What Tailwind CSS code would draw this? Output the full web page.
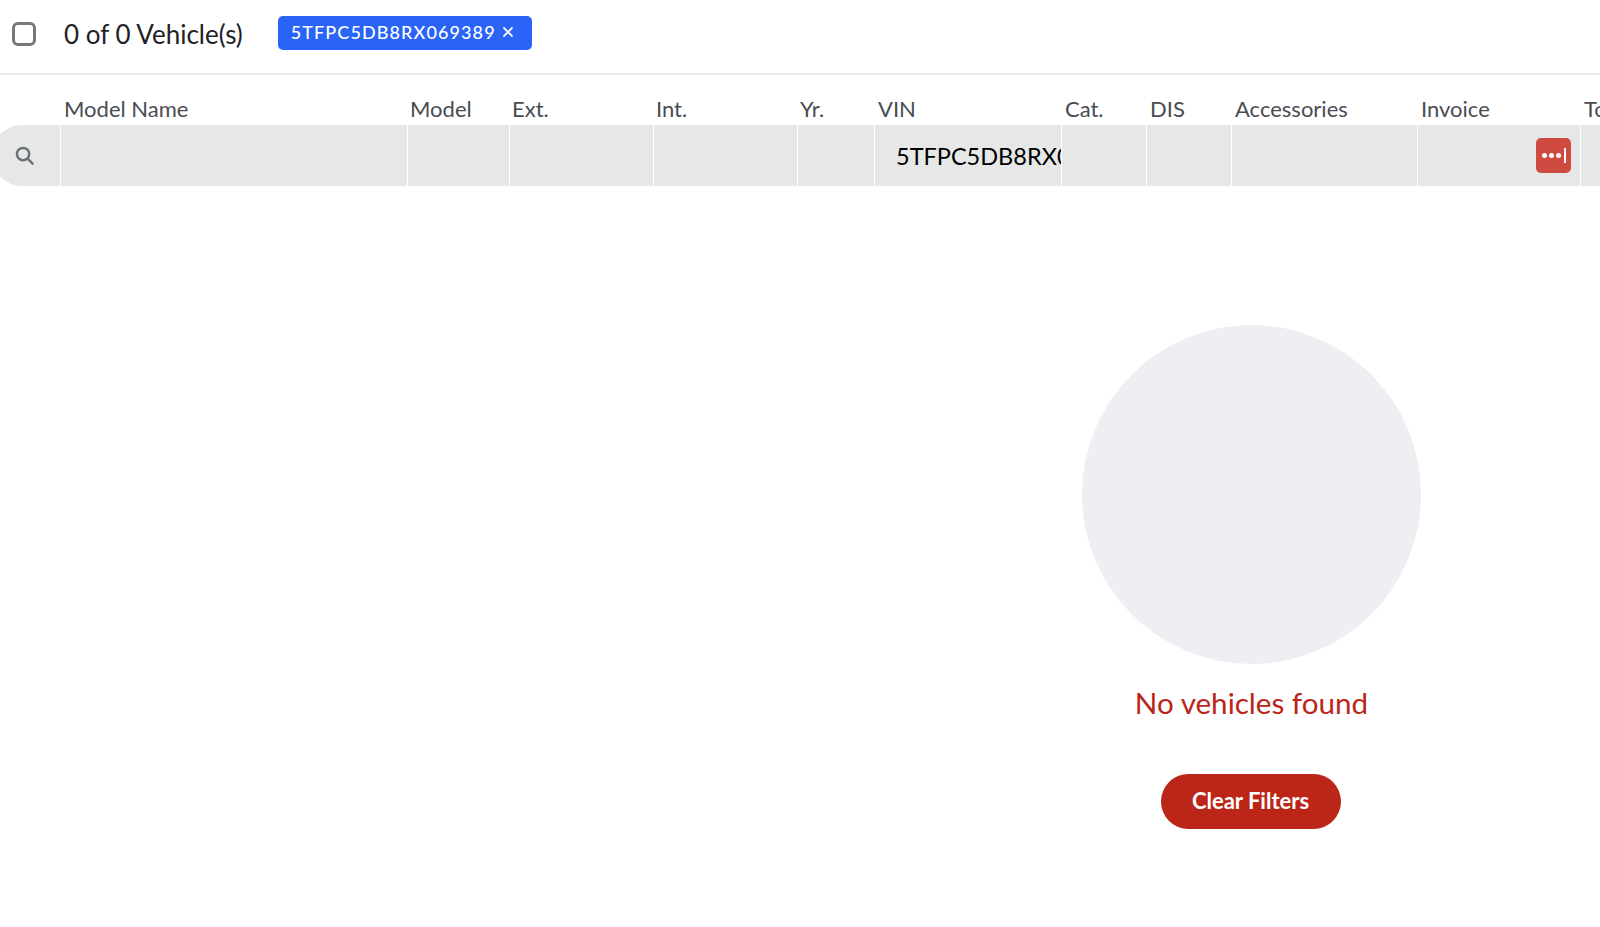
<!DOCTYPE html>
<html lang="en">
<head>
    <meta charset="UTF-8">
    <meta name="viewport" content="width=device-width, initial-scale=1.0">
    <title>Vehicles</title>
    <script src="https://cdn.jsdelivr.net/npm/@tailwindcss/browser@4"></script>
</head>
<body class="h-[927px] w-[1600px] overflow-hidden bg-white font-['Lato',sans-serif] text-[#33363b]">
    <!-- selection bar -->
    <div class="flex h-[75px] items-center border-b-2 border-[#e6e7e8] pb-[6px]">
        <div class="ml-[12px] size-[24px] rounded-[6px] border-[3px] border-[#74777c]"></div>
        <span class="ml-[28px] pt-[2px] text-[26px] text-[#1f2226]">0 of 0 Vehicle(s)</span>
        <div class="mb-[2px] ml-[35px] flex h-[34px] w-[254px] items-center rounded-[5px] bg-[#2a64f6] pl-[13px] text-white">
            <span class="text-[18px] font-medium tracking-[1.1px]">5TFPC5DB8RX069389</span>
            <svg class="ml-[6px] mb-[2px] size-[12px]" viewBox="0 0 12 12" fill="none" stroke="currentColor" stroke-width="1.8"><path d="M1.5 1.5l9 9M10.5 1.5l-9 9"/></svg>
        </div>
    </div>

    <!-- column headers -->
    <div class="grid h-[50px] grid-cols-[61px_347px_102px_144px_144px_77px_187px_85px_85px_186px_163px_100px] items-center overflow-hidden whitespace-nowrap pt-[16px] text-[22px] text-[#494c52]">
        <div></div>
        <div class="pl-[3px]">Model Name</div>
        <div class="pl-[2px]">Model</div>
        <div class="pl-[2px]">Ext.</div>
        <div class="pl-[2px]">Int.</div>
        <div class="pl-[2px]">Yr.</div>
        <div class="pl-[3px]">VIN</div>
        <div class="pl-[3px]">Cat.</div>
        <div class="pl-[3px]">DIS</div>
        <div class="pl-[3px]">Accessories</div>
        <div class="pl-[3px]">Invoice</div>
        <div class="pl-[3px]">Total</div>
    </div>

    <!-- filter row, its rounded end runs past the left edge -->
    <div class="-ml-[8px] grid h-[61px] grid-cols-[69px_347px_102px_144px_144px_77px_187px_85px_85px_186px_163px_100px] overflow-hidden rounded-l-[30px] bg-[#e6e8e8]">
        <div class="flex items-center justify-start border-r border-white pl-[23px]">
            <svg class="size-[19px] text-[#6d7074]" viewBox="0 0 20 20" fill="none" stroke="currentColor" stroke-width="2.6"><circle cx="8.5" cy="8.5" r="6.5"/><path d="M13.5 13.5l5 5" stroke-linecap="round"/></svg>
        </div>
        <div class="border-r border-white"></div>
        <div class="border-r border-white"></div>
        <div class="border-r border-white"></div>
        <div class="border-r border-white"></div>
        <div class="border-r border-white"></div>
        <div class="flex items-center overflow-hidden whitespace-nowrap border-r border-white pl-[21px] pt-[2px] text-[23.5px] text-black">5TFPC5DB8RX069389</div>
        <div class="border-r border-white"></div>
        <div class="border-r border-white"></div>
        <div class="border-r border-white"></div>
        <div class="flex items-center justify-end border-r border-white pr-[9px]">
            <div class="flex size-[35px] items-center justify-center gap-[2px] rounded-[5px] bg-[#cf4a40]">
                <span class="size-[5px] rounded-full bg-white"></span>
                <span class="size-[5px] rounded-full bg-white"></span>
                <span class="size-[5px] rounded-full bg-white"></span>
                <span class="ml-[1px] h-[15px] w-[2px] bg-white"></span>
            </div>
        </div>
        <div></div>
    </div>

    <!-- empty state -->
    <div class="ml-[1082px] flex w-[339px] flex-col items-center pt-[139px]">
        <div class="size-[339px] rounded-full bg-[#eeeff2]"></div>
        <p class="mt-[21px] whitespace-nowrap text-[29.6px] leading-[36px] text-[#bb2619]">No vehicles found</p>
        <button class="mr-[2px] mt-[53px] h-[55px] w-[180px] rounded-full bg-[#bb2619] pb-[3px] text-[22px] font-bold text-white">Clear Filters</button>
    </div>
</body>
</html>
